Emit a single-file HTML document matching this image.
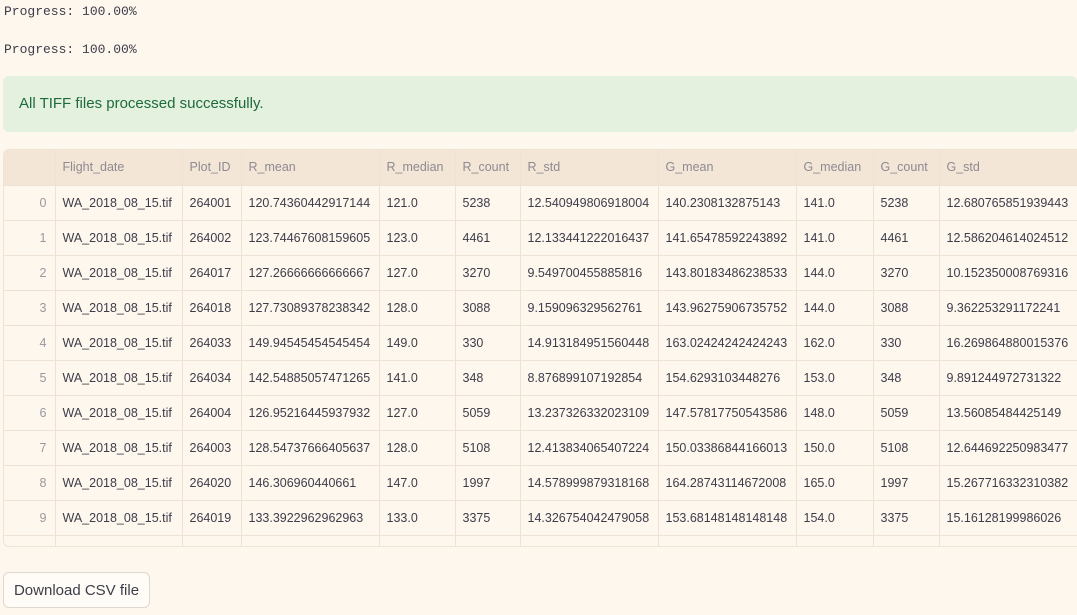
<!DOCTYPE html>
<html><head><meta charset="utf-8"><style>
body{margin:0;background:#fef7ee;width:1077px;height:615px;overflow:hidden;font-family:"Liberation Sans",sans-serif;position:relative}
.mono{position:absolute;left:4px;font-family:"Liberation Mono",monospace;font-size:13px;color:#3d3d4a}
.ok{position:absolute;left:3px;top:76px;width:1074px;height:56px;background:#e4f1df;border-radius:6px;color:#1d6b3c;font-size:15px;line-height:56px;padding-left:16px;box-sizing:border-box}
.tbl{position:absolute;left:3px;top:149px;width:1074px;height:398px;overflow:hidden;border:1px solid #efe3d4;border-right:none;border-radius:6px 0 0 6px;box-sizing:border-box}
table{border-collapse:collapse;font-size:12.5px;color:#3d3d4a;table-layout:fixed;width:1075px}
tr{height:35px}
td,th{padding:0 7px;border-right:1px solid #eee2d4;border-bottom:1px solid #eee2d4;white-space:nowrap;overflow:hidden;text-align:left}
th{background:#f4e6d6;color:#8d8a92;font-weight:normal}
td:first-child{text-align:right;color:#9a97a0;padding-right:8px}
.btn{position:absolute;left:3px;top:572px;width:147px;height:36px;border:1px solid #e0d8cf;border-radius:6px;background:#fffbf6;font-size:15px;color:#3d3d4a;text-align:center;line-height:35px;box-sizing:border-box}
</style></head><body>
<div class="mono" style="top:4px">Progress: 100.00%</div>
<div class="mono" style="top:42px">Progress: 100.00%</div>
<div class="ok">All TIFF files processed successfully.</div>
<div class="tbl"><table>
<colgroup><col style="width:51px"><col style="width:127px"><col style="width:59px"><col style="width:138px"><col style="width:76px"><col style="width:65px"><col style="width:138px"><col style="width:138px"><col style="width:77px"><col style="width:66px"><col style="width:140px"></colgroup>
<tr><th></th><th>Flight_date</th><th>Plot_ID</th><th>R_mean</th><th>R_median</th><th>R_count</th><th>R_std</th><th>G_mean</th><th>G_median</th><th>G_count</th><th>G_std</th></tr>
<tr><td>0</td><td>WA_2018_08_15.tif</td><td>264001</td><td>120.74360442917144</td><td>121.0</td><td>5238</td><td>12.540949806918004</td><td>140.2308132875143</td><td>141.0</td><td>5238</td><td>12.680765851939443</td></tr>
<tr><td>1</td><td>WA_2018_08_15.tif</td><td>264002</td><td>123.74467608159605</td><td>123.0</td><td>4461</td><td>12.133441222016437</td><td>141.65478592243892</td><td>141.0</td><td>4461</td><td>12.586204614024512</td></tr>
<tr><td>2</td><td>WA_2018_08_15.tif</td><td>264017</td><td>127.26666666666667</td><td>127.0</td><td>3270</td><td>9.549700455885816</td><td>143.80183486238533</td><td>144.0</td><td>3270</td><td>10.152350008769316</td></tr>
<tr><td>3</td><td>WA_2018_08_15.tif</td><td>264018</td><td>127.73089378238342</td><td>128.0</td><td>3088</td><td>9.159096329562761</td><td>143.96275906735752</td><td>144.0</td><td>3088</td><td>9.362253291172241</td></tr>
<tr><td>4</td><td>WA_2018_08_15.tif</td><td>264033</td><td>149.94545454545454</td><td>149.0</td><td>330</td><td>14.913184951560448</td><td>163.02424242424243</td><td>162.0</td><td>330</td><td>16.269864880015376</td></tr>
<tr><td>5</td><td>WA_2018_08_15.tif</td><td>264034</td><td>142.54885057471265</td><td>141.0</td><td>348</td><td>8.876899107192854</td><td>154.6293103448276</td><td>153.0</td><td>348</td><td>9.891244972731322</td></tr>
<tr><td>6</td><td>WA_2018_08_15.tif</td><td>264004</td><td>126.95216445937932</td><td>127.0</td><td>5059</td><td>13.237326332023109</td><td>147.57817750543586</td><td>148.0</td><td>5059</td><td>13.56085484425149</td></tr>
<tr><td>7</td><td>WA_2018_08_15.tif</td><td>264003</td><td>128.54737666405637</td><td>128.0</td><td>5108</td><td>12.413834065407224</td><td>150.03386844166013</td><td>150.0</td><td>5108</td><td>12.644692250983477</td></tr>
<tr><td>8</td><td>WA_2018_08_15.tif</td><td>264020</td><td>146.306960440661</td><td>147.0</td><td>1997</td><td>14.578999879318168</td><td>164.28743114672008</td><td>165.0</td><td>1997</td><td>15.267716332310382</td></tr>
<tr><td>9</td><td>WA_2018_08_15.tif</td><td>264019</td><td>133.3922962962963</td><td>133.0</td><td>3375</td><td>14.326754042479058</td><td>153.68148148148148</td><td>154.0</td><td>3375</td><td>15.16128199986026</td></tr>
<tr><td></td><td></td><td></td><td></td><td></td><td></td><td></td><td></td><td></td><td></td><td></td></tr>
</table></div>
<div class="btn">Download CSV file</div>
</body></html>
